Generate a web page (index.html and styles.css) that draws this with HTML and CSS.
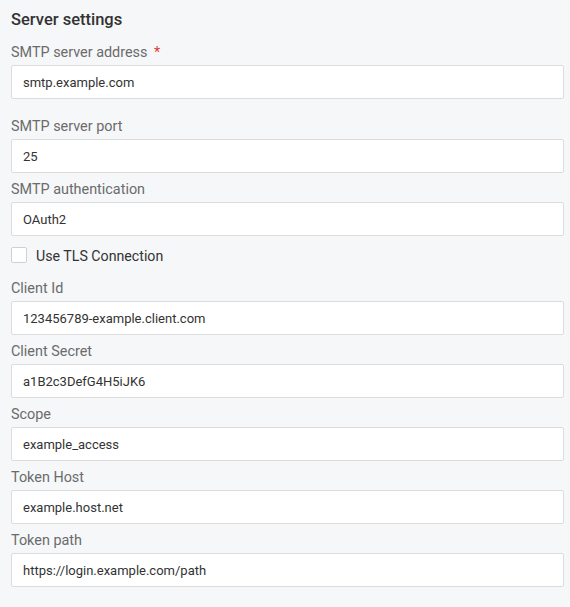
FILE: index.html
```html
<!DOCTYPE html>
<html lang="en">

<head>
    <meta charset="UTF-8">
    <meta name="viewport" content="width=device-width, initial-scale=1.0">
    <title>Server settings</title>
    <link rel="stylesheet" href="styles.css">
</head>

<body>
    <div class="settings">
        <h2 class="title">Server settings</h2>

        <div class="field field-required">
            <label class="label">SMTP server address <span class="star">*</span></label>
            <input class="input" type="text" value="smtp.example.com">
        </div>
        <div class="field">
            <label class="label">SMTP server port</label>
            <input class="input" type="text" value="25">
        </div>
        <div class="field">
            <label class="label">SMTP authentication</label>
            <input class="input" type="text" value="OAuth2">
        </div>

        <label class="check">
            <span class="box"></span>
            <span class="check-text">Use TLS Connection</span>
        </label>

        <div class="field">
            <label class="label">Client Id</label>
            <input class="input" type="text" value="123456789-example.client.com">
        </div>
        <div class="field">
            <label class="label">Client Secret</label>
            <input class="input" type="text" value="a1B2c3DefG4H5iJK6">
        </div>
        <div class="field">
            <label class="label">Scope</label>
            <input class="input" type="text" value="example_access">
        </div>
        <div class="field">
            <label class="label">Token Host</label>
            <input class="input" type="text" value="example.host.net">
        </div>
        <div class="field">
            <label class="label">Token path</label>
            <input class="input" type="text" value="https://login.example.com/path">
        </div>
    </div>
</body>

</html>
```

FILE: styles.css
```css
* {
    padding: 0;
    margin: 0;
    box-sizing: border-box;
}

body {
    background-color: #f6f7f9;
    font-family: Roboto, "Liberation Sans", sans-serif;
    color: #333;
}

.settings {
    padding: 8px 6px 0 11px;
    display: flex;
    flex-direction: column;
}

.title {
    font-size: 16.5px;
    font-weight: 500;
    line-height: 24px;
    color: #333;
    margin-bottom: 9px;
}

.field {
    display: flex;
    flex-direction: column;
    margin-bottom: 6px;
}

.field-required {
    margin-bottom: 17px;
}

.label {
    font-size: 14.4px;
    line-height: 20px;
    color: #6b6b6b;
    padding-top: 1px;
    margin-bottom: 2px;
}

.field-required .label {
    padding-top: 2px;
    margin-bottom: 2px;
}

.star {
    color: #e53935;
    margin-left: 3px;
}

.input {
    height: 34px;
    width: 100%;
    border: 1px solid #dcdcdc;
    border-radius: 2px;
    background-color: #fff;
    padding: 0 11px;
    font-family: Roboto, "Liberation Sans", sans-serif;
    font-size: 13px;
    color: #333;
    outline: none;
}

.check {
    display: flex;
    align-items: center;
    gap: 9px;
    font-size: 14.2px;
    line-height: 20px;
    color: #333;
    margin: 2px 0 12px;
}

.check-text {
    padding-top: 2px;
}

.box {
    width: 16px;
    height: 16px;
    border: 1px solid #d0d0d0;
    border-radius: 2px;
    background-color: #fff;
}
```
